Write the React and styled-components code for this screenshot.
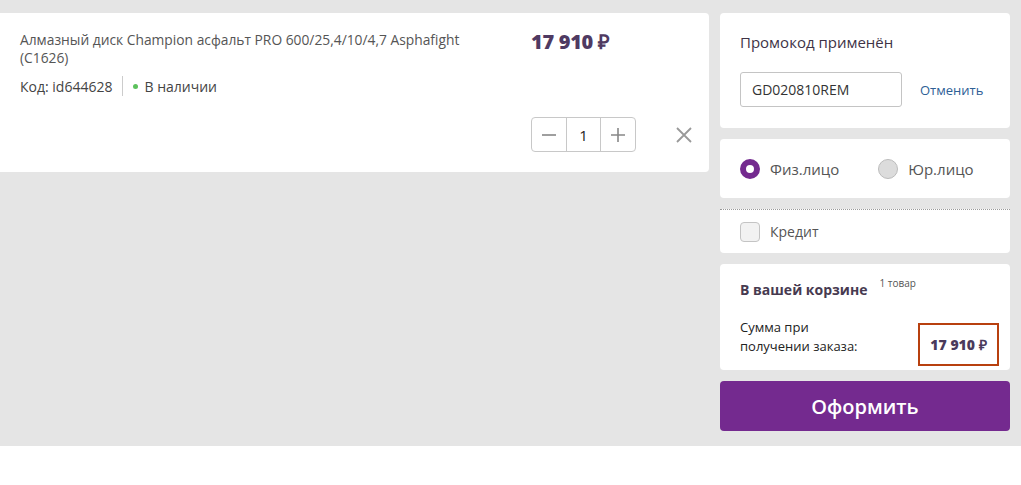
import React from "react";
import styled, { createGlobalStyle } from "styled-components";

const Global = createGlobalStyle`
  body {
    margin: 0;
    background: #fff;
    font-family: "Open Sans", "Liberation Sans", sans-serif;
  }
`;

const Page = styled.div`
  background: #e5e5e5;
  height: 446px;
  box-sizing: border-box;
  padding-top: 13px;
  display: flex;
  align-items: flex-start;
  gap: 11px;
`;

const ProductCard = styled.div`
  width: 709px;
  height: 159px;
  box-sizing: border-box;
  background: #fff;
  border-radius: 0 4px 4px 0;
  padding: 18px 20px 0 20px;
  display: flex;
`;

const Info = styled.div`
  width: 462px;
  flex-shrink: 0;
`;

const Title = styled.div`
  font-size: 13.8px;
  line-height: 18px;
  color: #555;
`;

const Meta = styled.div`
  margin-top: 9px;
  display: flex;
  align-items: center;
  font-size: 14px;
  color: #444;
`;

const Divider = styled.span`
  width: 1px;
  height: 20px;
  background: #ccc;
  margin: 0 10px;
`;

const Dot = styled.span`
  width: 5px;
  height: 5px;
  border-radius: 50%;
  background: #5cc15c;
  margin-right: 6px;
`;

const Side = styled.div`
  margin-left: 49px;
  display: flex;
  flex-direction: column;
`;

const Price = styled.div`
  font-size: 20px;
  font-weight: 800;
  color: #4f3a62;
  line-height: 26px;
  margin-top: -2px;
  letter-spacing: -0.3px;
`;

const Controls = styled.div`
  margin-top: 62px;
  display: flex;
  align-items: center;
  gap: 39px;
`;

const Qty = styled.div`
  display: flex;
  border: 1px solid #c8c8c8;
  border-radius: 4px;
  height: 35px;
  box-sizing: border-box;
`;

const QtyBtn = styled.div`
  width: 34px;
  display: flex;
  align-items: center;
  justify-content: center;
  color: #888;
`;

const QtyValue = styled.div`
  width: 33px;
  display: flex;
  align-items: center;
  justify-content: center;
  border-left: 1px solid #c8c8c8;
  border-right: 1px solid #c8c8c8;
  font-size: 15px;
  color: #222;
`;

const Column = styled.div`
  width: 290px;
  display: flex;
  flex-direction: column;
`;

const Card = styled.div`
  background: #fff;
  border-radius: 4px;
  box-sizing: border-box;
  padding: ${(p) => p.$pad || "0 20px"};
  height: ${(p) => p.$h}px;
  margin-bottom: 11px;
  ${(p) => p.$dotted && "border-top: 1px dotted #9a9a9a; border-radius: 0 0 4px 4px;"}
`;

const CardTitle = styled.div`
  font-size: 15px;
  color: #3e3346;
  line-height: 20px;
`;

const PromoRow = styled.div`
  margin-top: 20px;
  display: flex;
  align-items: center;
  gap: 18px;
`;

const PromoInput = styled.div`
  width: 162px;
  height: 35px;
  box-sizing: border-box;
  border: 1px solid #c4c4c4;
  border-radius: 3px;
  padding-left: 11px;
  display: flex;
  align-items: center;
  font-size: 14px;
  color: #333;
`;

const LinkText = styled.span`
  font-size: 13px;
  color: #2e6096;
`;

const Row = styled.div`
  display: flex;
  align-items: center;
  height: 100%;
`;

const Option = styled.label`
  display: flex;
  align-items: center;
  gap: 10px;
  font-size: ${(p) => p.$fs || 15}px;
  color: #555;
  margin-right: ${(p) => p.$mr || 0}px;
`;

const Radio = styled.span`
  width: 20px;
  height: 20px;
  border-radius: 50%;
  box-sizing: border-box;
  ${(p) =>
    p.$on
      ? "background: #fff; border: 6.5px solid #742a8f;"
      : "background: #dcdcdc; border: 1px solid #bcbcbc;"}
`;

const Check = styled.span`
  width: 20px;
  height: 20px;
  box-sizing: border-box;
  border-radius: 4px;
  background: #f2f2f2;
  border: 1px solid #c4c4c4;
`;

const CartHead = styled.div`
  display: flex;
  align-items: flex-start;
`;

const CartTitle = styled.span`
  font-size: 14px;
  font-weight: 700;
  color: #473a50;
  margin-top: 16px;
`;

const Count = styled.sup`
  font-size: 10px;
  color: #555;
  margin-left: 12px;
  margin-top: 14px;
  line-height: 1;
`;

const SumRow = styled.div`
  margin-top: 19px;
  display: flex;
  justify-content: space-between;
  align-items: flex-start;
`;

const SumLabel = styled.div`
  font-size: 13px;
  line-height: 19px;
  color: #222;
`;

const SumBox = styled.div`
  width: 81px;
  height: 43px;
  margin-top: 5px;
  box-sizing: border-box;
  border: 2px solid #b8400f;
  display: flex;
  align-items: center;
  justify-content: center;
  font-size: 14px;
  font-weight: 800;
  color: #4a3a5c;
  margin-right: -9px;
`;

const Submit = styled.button`
  height: 50px;
  border: none;
  border-radius: 4px;
  background: #742a8f;
  color: #fff;
  font-family: inherit;
  font-size: 20px;
  font-weight: 600;
  cursor: pointer;
`;

export default function App() {
  return (
    <>
      <Global />
      <Page>
        <ProductCard>
          <Info>
            <Title>
              Алмазный диск Champion асфальт PRO 600/25,4/10/4,7 Asphafight
              (C1626)
            </Title>
            <Meta>
              Код: id644628
              <Divider />
              <Dot />В наличии
            </Meta>
          </Info>
          <Side>
            <Price>17 910 ₽</Price>
            <Controls>
              <Qty>
                <QtyBtn>
                  <svg width="16" height="16" viewBox="0 0 16 16">
                    <path d="M1 8h14" stroke="#888" strokeWidth="1.6" />
                  </svg>
                </QtyBtn>
                <QtyValue>1</QtyValue>
                <QtyBtn>
                  <svg width="16" height="16" viewBox="0 0 16 16">
                    <path d="M1 8h14M8 1v14" stroke="#888" strokeWidth="1.6" />
                  </svg>
                </QtyBtn>
              </Qty>
              <svg width="18" height="18" viewBox="0 0 18 18">
                <path d="M2 2l14 14M16 2L2 16" stroke="#999" strokeWidth="1.8" />
              </svg>
            </Controls>
          </Side>
        </ProductCard>
        <Column>
          <Card $h={115} $pad="19px 20px 0">
            <CardTitle>Промокод применён</CardTitle>
            <PromoRow>
              <PromoInput>GD020810REM</PromoInput>
              <LinkText>Отменить</LinkText>
            </PromoRow>
          </Card>
          <Card $h={59}>
            <Row>
              <Option $mr={39}>
                <Radio $on />
                Физ.лицо
              </Option>
              <Option>
                <Radio />
                Юр.лицо
              </Option>
            </Row>
          </Card>
          <Card $h={44} $dotted>
            <Row>
              <Option $fs={14}>
                <Check />
                Кредит
              </Option>
            </Row>
          </Card>
          <Card $h={106}>
            <CartHead>
              <CartTitle>В вашей корзине</CartTitle>
              <Count>1 товар</Count>
            </CartHead>
            <SumRow>
              <SumLabel>
                Сумма при
                <br />
                получении заказа:
              </SumLabel>
              <SumBox>17 910 ₽</SumBox>
            </SumRow>
          </Card>
          <Submit>Оформить</Submit>
        </Column>
      </Page>
    </>
  );
}
